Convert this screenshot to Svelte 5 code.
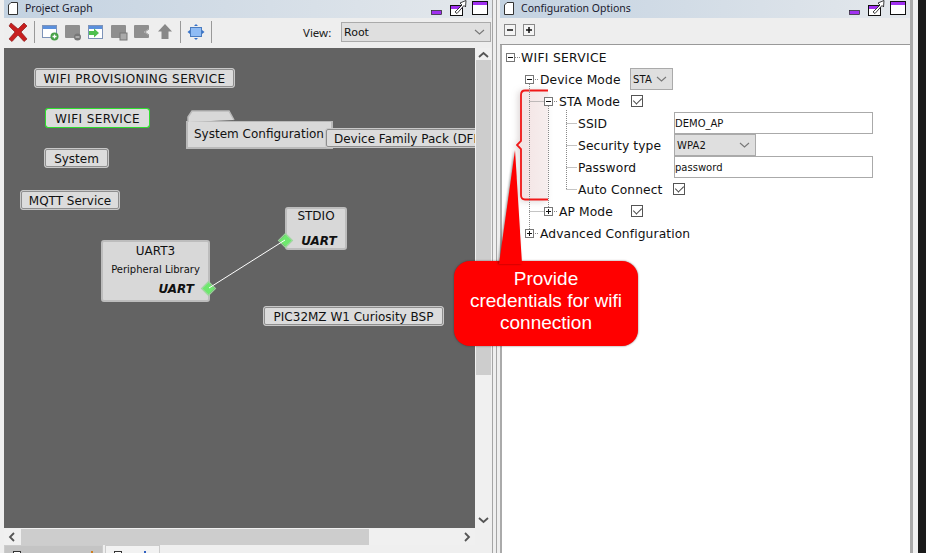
<script>
  const nodes = [
    { label: 'WIFI PROVISIONING SERVICE', x: 30, y: 20, w: 201, caps: true },
    { label: 'WIFI SERVICE', x: 41, y: 60, w: 105, sel: true, caps: true },
    { label: 'System', x: 40, y: 100, w: 65 },
    { label: 'MQTT Service', x: 16, y: 142, w: 100 },
    { label: 'PIC32MZ W1 Curiosity BSP', x: 259, y: 258, w: 181 }
  ];
</script>

{#snippet winButtons()}
  <div class="winbtns">
    <svg width="58" height="18" viewBox="0 0 58 18">
      <rect x=".5" y="10.500" width="10" height="4" fill="#a030f0" stroke="#222" stroke-width=".7"/>
      <rect x="19.500" y="5.500" width="12" height="10" fill="#fff" stroke="#111"/>
      <rect x="20" y="6" width="11" height="3" fill="#a030f0"/>
      <path d="M24 12 L31 5 L29 3 L35 .5 L34.500 7 L33 5.500 L26 13.500Z" fill="#fff" stroke="#111" stroke-width=".8"/>
      <rect x="41.500" y="1.500" width="15" height="13" fill="#fff" stroke="#111"/>
      <rect x="42" y="2" width="14" height="3" fill="#a030f0"/>
    </svg>
  </div>
{/snippet}

{#snippet pageIcon()}
  <svg class="page" width="10" height="13" viewBox="0 0 10 13"><path d="M.5 12.500V3L3 .5H9.500V12.500Z" fill="#fff" stroke="#333"/></svg>
{/snippet}

{#snippet chevron()}
  <svg width="11" height="6" viewBox="0 0 11 6"><path d="M1 1l4.500 4L10 1" fill="none" stroke="#777" stroke-width="1.100"/></svg>
{/snippet}

<div class="screen">
  <section class="panel left">
    <header class="title">{@render pageIcon()}<span>Project Graph</span>{@render winButtons()}</header>
    <div class="toolbar">
      <svg class="xicon" width="20" height="20" viewBox="0 0 20 20"><path d="M3 1 L10 7 L16 1 L19 4 L13 10 L19 17 L16 19.500 L10 13 L4 19.500 L1 17 L7 10 L1 4Z" fill="#c81e1e" stroke="#8c1c1c" stroke-width=".7"/></svg>
      <i class="sep"></i>
      <div class="tools">
        <svg width="18" height="18" viewBox="0 0 18 18"><rect x="1.500" y="2.500" width="14" height="12" fill="#fff" stroke="#7d93b8"/><rect x="2" y="3" width="13" height="3" fill="#5b90dd"/><circle cx="13.500" cy="13.500" r="4" fill="#47a047"/><path d="M11.500 13.500h4M13.500 11.500v4" stroke="#fff" stroke-width="1.300"/></svg>
        <svg width="18" height="18" viewBox="0 0 18 18"><rect x="1" y="2" width="15" height="13" rx="1" fill="#8f8f8f"/><circle cx="13.500" cy="14" r="3.500" fill="#777"/><path d="M11.500 14h4" stroke="#ddd"/></svg>
        <svg width="18" height="18" viewBox="0 0 18 18"><rect x="1.500" y="2.500" width="14" height="13" fill="#fff" stroke="#7d93b8"/><rect x="2" y="3" width="13" height="3" fill="#5b90dd"/><path d="M2 8h5V5.500L12 10l-5 4.500V12H2Z" fill="#4fc04f"/></svg>
        <svg width="18" height="18" viewBox="0 0 18 18"><rect x="1" y="2" width="15" height="13" rx="1" fill="#8f8f8f"/><rect x="10" y="10" width="7" height="7" fill="#aaa" stroke="#777"/></svg>
        <svg width="18" height="18" viewBox="0 0 18 18"><rect x="1" y="2" width="15" height="13" rx="1" fill="#8f8f8f"/><path d="M17 5L11 9l6 4Z" fill="#eee"/><path d="M16 6L12 9l4 3" fill="none" stroke="#999"/></svg>
        <svg width="18" height="18" viewBox="0 0 18 18"><path d="M9 1L16 8.500H12.500V16h-7V8.500H2Z" fill="#888"/></svg>
      </div>
      <i class="sep"></i>
      <svg class="fit" width="18" height="18" viewBox="0 0 18 18"><rect x="3.500" y="4.500" width="11" height="9" fill="#8fbcf5" stroke="#4a7cc0"/><path d="M.5 9L3 7v4ZM17.500 9L15 7v4ZM9 1L7 3h4ZM9 17l-2-2h4Z" fill="#3773c9"/></svg>
      <i class="sep"></i>
      <span class="view">View:</span>
      <div class="combo wide">Root{@render chevron()}</div>
    </div>
    <div class="workarea">
      <div class="canvas">
        <svg class="wire" width="471" height="480" viewBox="0 0 471 480"><path d="M205 240L281 192" stroke="#fff" stroke-width="1"/></svg>
        {#each nodes as n}
          <div class="node" class:sel={n.sel} class:caps={n.caps} style="left:{n.x}px;top:{n.y}px;width:{n.w}px">{n.label}</div>
        {/each}
        <div class="folder">
          <svg width="48" height="12" viewBox="0 0 48 12"><path d="M1 12V7L5 1H42L47 10" fill="#d8d8d8" stroke="#bbb" stroke-width="1.500"/></svg>
          <div class="fbody">System Configuration</div>
        </div>
        <div class="node dfp"><span>Device Family Pack (DFP)</span></div>
        <div class="block stdio">
          <div>STDIO</div>
          <b>UART</b>
          <i class="port"></i>
        </div>
        <div class="block uart3">
          <div>UART3</div>
          <small>Peripheral Library</small>
          <b>UART</b>
          <i class="port"></i>
        </div>
      </div>
      <div class="vscroll">
        <svg class="arrow" width="17" height="12" viewBox="0 0 17 12"><path d="M4 9l4.500-4L13 9" fill="none" stroke="#555" stroke-width="1.800"/></svg>
        <div class="vthumb"></div>
        <svg class="arrow bottom" width="17" height="12" viewBox="0 0 17 12"><path d="M4 4l4.500 4L13 4" fill="none" stroke="#555" stroke-width="1.800"/></svg>
      </div>
      <div class="hscroll">
        <svg width="17" height="16" viewBox="0 0 17 16"><path d="M10 4L6 8l4 4" fill="none" stroke="#555" stroke-width="1.800"/></svg>
        <div class="track"><div class="hthumb"></div></div>
        <svg width="17" height="16" viewBox="0 0 17 16"><path d="M7 4l4 4-4 4" fill="none" stroke="#555" stroke-width="1.800"/></svg>
      </div>
      <i></i>
    </div>
    <div class="tabs">
      <div class="tab active"><em></em><u></u></div>
      <div class="tab"><em></em><u class="blue"></u></div>
    </div>
  </section>
  <div class="splitter"></div>

  <section class="panel right">
    <header class="title">{@render pageIcon()}<span>Configuration Options</span>{@render winButtons()}</header>
    <div class="toolbar small">
      <span class="sq"><svg width="12" height="12" viewBox="0 0 12 12"><rect x=".5" y=".5" width="11" height="11" fill="#f4f4f4" stroke="#888"/><path d="M3 6h6" stroke="#111" stroke-width="1.500"/></svg></span>
      <span class="sq"><svg width="12" height="12" viewBox="0 0 12 12"><rect x=".5" y=".5" width="11" height="11" fill="#f4f4f4" stroke="#888"/><path d="M3 6h6M6 3v6" stroke="#111" stroke-width="1.500"/></svg></span>
    </div>
    <div class="tree">
      <svg class="lines" width="200" height="200" viewBox="0 0 200 200">
        <path d="M13 12.500h6M31 34.500h6M27.500 39V188M27.500 56.500H42M50 56.500h6M46.500 61V166M27.500 166.500H42M50 166.500h6M31 188.500h6M64.500 65V144M64.500 78.500H75M64.500 100.500H75M64.500 122.500H75M64.500 144.500H75" stroke="#888" stroke-dasharray="1 1" fill="none"/>
      </svg>
      <div class="row l0"><span class="bx"></span><span class="txt caps">WIFI SERVICE</span></div>
      <div class="row l1"><span class="bx"></span><span class="txt name dm">Device Mode</span><div class="combo sta">STA{@render chevron()}</div></div>
      <div class="row l2"><span class="bx"></span><span class="txt name">STA Mode</span><span class="check"></span></div>
      <div class="row l3"><span class="txt lbl">SSID</span><div class="input">DEMO_AP</div></div>
      <div class="row l3"><span class="txt lbl">Security type</span><div class="combo wpa">WPA2{@render chevron()}</div></div>
      <div class="row l3"><span class="txt lbl">Password</span><div class="input">password</div></div>
      <div class="row l3"><span class="txt lbl auto">Auto Connect</span><span class="check"></span></div>
      <div class="row l2"><span class="bx plus"></span><span class="txt name">AP Mode</span><span class="check"></span></div>
      <div class="row l1"><span class="bx plus"></span><span class="txt">Advanced Configuration</span></div>
    </div>
  </section>
  <div class="edge"></div>
  <div class="black"></div>

  <svg class="bracket" width="34" height="116" viewBox="0 0 34 116">
    <defs><linearGradient id="fade" x1="0" x2="1" y1="0" y2="0"><stop offset="0" stop-color="#f3e2e2"/><stop offset="1" stop-color="#f6eeee"/></linearGradient></defs>
    <path d="M32 2H9Q5 2 5 7V53L1 57L5 61V107Q5 112 9 112H32Z" fill="url(#fade)"/>
    <path d="M32 2.500H9Q5 2.500 5 7V53L1 57L5 61V107Q5 111.500 9 111.500H32" fill="none" stroke="#f01818" stroke-width="1.800"/>
  </svg>
  <div class="callout">
    <svg width="30" height="116" viewBox="0 0 30 116"><path d="M17 0L24 114H1Z" fill="#f00"/></svg>
    <p>Provide<br/>credentials for wifi<br/>connection</p>
  </div>
</div>

<style>
  :global(body) { margin: 0; background: #fff; }
  .screen {
    position: relative; width: 926px; height: 553px; overflow: hidden;
    display: flex; font-family: "DejaVu Sans", sans-serif; font-size: 12px; color: #111; background: #f0f0f0;
  }
  .panel { display: flex; flex-direction: column; height: 553px; }
  .left { width: 492px; flex: none; padding-left: 4px; box-sizing: border-box; background: #efefef; }
  .splitter { width: 8px; flex: none; box-sizing: border-box; border-left: 1px solid #a5a5a5; background: linear-gradient(90deg, #efefef 0 3px, #a5a5a5 3px 4px, #efefef 4px); }
  .right { width: 413px; flex: none; box-sizing: border-box; background: #fff; border-right: 3px solid #a9a9a9; }
  .edge { width: 5px; flex: none; background: #f0f0f0; }
  .black { width: 8px; flex: none; background: #1a1a1a; }
  .title {
    height: 18px; flex: none; box-sizing: border-box; display: flex; align-items: flex-start; padding: 2px 0 0 4px; gap: 7px;
    background: linear-gradient(90deg, #c3d2e1, #e4e8ec); font: 10.500px/13px "Noto Sans", sans-serif; color: #1a1a2e;
  }
  .page { flex: none; }
  .winbtns { margin: -2px 0 0 auto; padding-right: 3px; height: 18px; }
  .winbtns svg { display: block; }
  .toolbar { height: 30px; flex: none; background: #eee; display: flex; align-items: center; position: relative; padding-bottom: 2px; box-sizing: border-box; }
  .xicon { margin-left: 4px; }
  .sep { width: 1px; height: 22px; background: #999; margin: 0 6px; }
  .tools { display: flex; gap: 5px; }
  .view { margin-left: 85px; font: 11.500px "Noto Sans", sans-serif; color: #222; width: 38px; }
  .combo {
    display: flex; align-items: center; justify-content: space-between; box-sizing: border-box;
    background: #dfdfdf; border: 1px solid #aaa; padding: 0 5px 0 2px; font-size: 10px; font-family: "DejaVu Sans", sans-serif;
  }
  .wide { width: 150px; height: 20px; font-size: 11px; }
  .toolbar.small { padding: 0 0 3px 4px; height: 27px; gap: 7px; border-bottom: 1px solid #999; }
  .sq { display: flex; }
  .workarea {
    flex: none; display: grid; grid-template-columns: 471px 17px; grid-template-rows: 480px 17px;
  }
  .canvas { position: relative; background: #636363; overflow: hidden; }
  .wire { position: absolute; left: 0; top: 0; z-index: 1; }
  .node {
    position: absolute; box-sizing: border-box; height: 20px; line-height: 20px; text-align: center;
    background: #dcdcdc; border: 1px solid #c8c8c8; border-radius: 3px; font-size: 12px; white-space: nowrap; outline: 1px solid #8e8e8e; outline-offset: -2px;
  }
  .caps { letter-spacing: .4px; }
  .sel { border-color: #2fdc2f; outline-color: #2fdc2f; outline-offset: -1px; }
  .dfp { left: 321px; top: 80px; width: 160px; padding-left: 8px; text-align: left; overflow: hidden; }
  .folder { position: absolute; left: 182px; top: 62px; width: 147px; }
  .folder svg { display: block; margin-left: 1px; }
  .fbody { box-sizing: border-box; height: 28px; margin-top: -1px; background: #d9d9d9; border: 2px solid #b9b9b9; border-top-width: 1px; padding: 5px 0 0 6px; font-size: 12px; white-space: nowrap; }
  .block {
    position: absolute; box-sizing: border-box; background: #d8d8d8; border: 2px solid #bdbdbd; border-radius: 3px; text-align: center;
  }
  .block b { display: block; font-style: italic; font-size: 12px; color: #111; }
  .stdio { left: 281px; top: 159px; width: 62px; height: 43px; }
  .stdio b { margin-top: 11px; padding-left: 6px; }
  .uart3 { left: 97px; top: 192px; width: 109px; height: 62px; padding-top: 2px; }
  .uart3 small { display: block; font-size: 10px; margin-top: 6px; }
  .uart3 b { text-align: right; padding-right: 14px; margin-top: 7px; }
  .port { position: absolute; width: 9px; height: 9px; background: #6ee86e; transform: rotate(45deg); outline: 1px solid #9fd49f; }
  .stdio .port { left: -6px; bottom: 3px; }
  .uart3 .port { right: -5px; bottom: 7px; }
  .vscroll { position: relative; background: #f0f0f0; }
  .vthumb { position: absolute; left: 1px; right: 1px; top: 12px; height: 315px; background: #cdcdcd; }
  .arrow { position: absolute; top: 0; left: 0; }
  .arrow.bottom { top: auto; bottom: 2px; }
  .hscroll { display: flex; align-items: center; background: #f0f0f0; padding-top: 1px; }
  .track { flex: 1; height: 16px; }
  .hthumb { width: 348px; height: 16px; background: #cdcdcd; }
  .tabs { flex: none; height: 8px; display: flex; gap: 2px; }
  .tab { position: relative; width: 55px; background: #f2f2f2; border: 1px solid #ccc; border-bottom: 0; box-sizing: border-box; }
  .tab.active { width: 99px; background: #c4c4c4; }
  .tab em { position: absolute; left: 8px; top: 5px; width: 6px; height: 4px; background: #fff; border: 1px solid #333; }
  .tab u { position: absolute; right: 9px; top: 5px; width: 2px; height: 4px; background: #d08020; }
  .tab u.blue { background: #3060c0; right: 13px; }
  .tree { position: relative; z-index: 2; flex: 1; padding-top: 1px; border-left: 2px solid #aaa; font-size: 12.300px; }
  .lines { position: absolute; left: 0; top: 0; }
  .row { position: relative; height: 22px; display: flex; align-items: center; white-space: nowrap; letter-spacing: .1px; }
  .txt { padding-top: 2px; }
  .bx {
    position: relative; flex: none; width: 9px; height: 9px; box-sizing: border-box; border: 1px solid #777; background: #fff; margin-right: 6px;
  }
  .bx::before { content: ""; position: absolute; left: 1px; top: 3px; width: 5px; height: 1px; background: #111; }
  .bx.plus::after { content: ""; position: absolute; left: 3px; top: 1px; width: 1px; height: 5px; background: #111; }
  .l0 { padding-left: 4px; }
  .l0 .caps { letter-spacing: .3px; }
  .l1 { padding-left: 23px; }
  .l2 { padding-left: 42px; }
  .l3 { padding-left: 76px; }
  .name { width: 72px; }
  .name.dm { width: 90px; }
  .lbl { width: 96px; }
  .lbl.auto { width: 95px; }
  .sta { width: 43px; height: 22px; }
  .wpa { width: 82px; height: 22px; }
  .input {
    box-sizing: border-box; width: 199px; height: 22px; border: 1px solid #aaa; background: #fff; font-size: 10px; line-height: 21px; padding-left: 0; letter-spacing: 0;
  }
  .check {
    width: 12px; height: 12px; border: 1px solid #555; background: #fff; box-sizing: border-box; position: relative;
  }
  .check::after {
    content: ""; position: absolute; left: 3px; top: 0; width: 4px; height: 7px;
    border: solid #444; border-width: 0 1.500px 1.500px 0; transform: rotate(45deg);
  }
  .bracket { position: absolute; z-index: 1; left: 516px; top: 88px; filter: drop-shadow(-2px 1px 3px rgba(120, 90, 90, .25)); }
  .callout { position: absolute; z-index: 3; left: 454px; top: 261px; width: 184px; height: 85px; background: #f00; border-radius: 16px; box-shadow: 0 0 2px rgba(60, 30, 30, .7); }
  .callout svg { position: absolute; left: 44px; top: -111px; filter: drop-shadow(-1px 0 1px rgba(0, 0, 0, .4)); }
  .callout p { position: relative; margin: 7px 0 0; text-align: center; color: #fff; font: 19px/22px "Liberation Sans", sans-serif; }
</style>
